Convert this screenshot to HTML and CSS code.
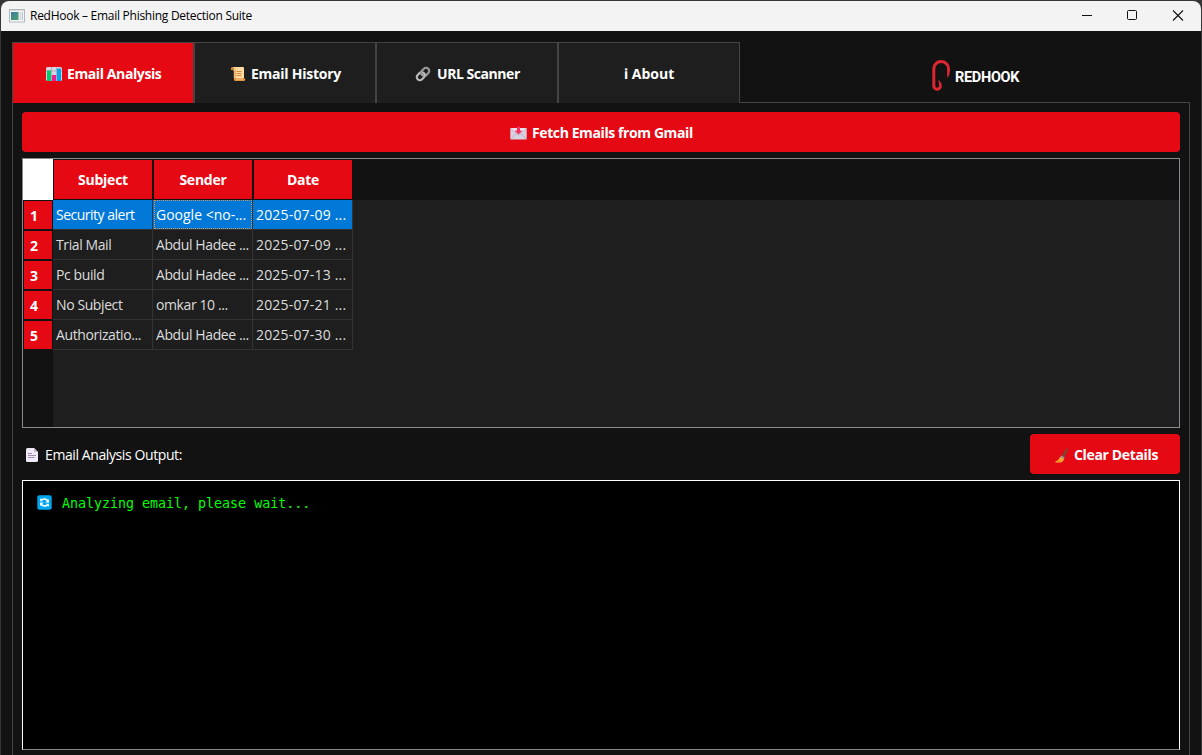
FILE: index.html
```html
<!DOCTYPE html>
<html lang="en">
<head>
<meta charset="utf-8">
<title>RedHook – Email Phishing Detection Suite</title>
<link rel="stylesheet" href="styles.css">
</head>
<body>
<div class="window">
  <header class="titlebar">
    <svg class="app-icon" width="16" height="14" viewBox="0 0 16 14"><defs><linearGradient id="screen" x1="0" y1="0" x2="1" y2="1"><stop offset="0" stop-color="#3f78a8"/><stop offset="1" stop-color="#49a567"/></linearGradient></defs><rect x=".5" y=".5" width="15" height="12.5" fill="#f5f5f5" stroke="#b4b8bb"/><path d="M1 1.5h14" stroke="#d4dadd"/><rect x="2" y="3" width="7.5" height="8" fill="url(#screen)"/><rect x="10.5" y="3" width="1.7" height="8" fill="#d4d8db"/><rect x="13" y="3" width="1" height="8" fill="#b2c7d5"/></svg>
    <span class="title">RedHook – Email Phishing Detection Suite</span>
    <div class="controls">
      <svg width="12" height="12" viewBox="0 0 12 12"><path d="M2 5.5h10" stroke="#111"/></svg>
      <svg width="12" height="12" viewBox="0 0 12 12"><rect x="1.5" y=".5" width="9" height="9" rx="1" fill="none" stroke="#111"/></svg>
      <svg width="12" height="12" viewBox="0 0 12 12"><path d="M1 .5l10 10M11 .5L1 10.500" stroke="#111" stroke-width="1.1"/></svg>
    </div>
  </header>
  <main class="content">
    <div class="top">
      <nav class="tabs">
        <div class="tab active analysis">
          <svg width="16" height="16" viewBox="0 0 16 16"><rect x="0" y="1" width="16" height="14" rx="1.5" fill="#d9d3e2"/><path d="M5.5 1v14M10.5 1v14M0 5h16M0 10h16" stroke="#a99bb8" stroke-width=".7"/><rect x="1" y="4.5" width="4" height="10.5" fill="#00cc6a"/><rect x="6" y="9" width="4" height="6" fill="#f01b93"/><rect x="11" y="2.5" width="4" height="12.5" fill="#00a6ed"/></svg>
          <span>Email Analysis</span></div>
        <div class="tab history">
          <svg width="16" height="16" viewBox="0 0 16 16"><path d="M2.5 1H13a1 1 0 0 1 1 1v10H5.5V4.5H3z" fill="#ffdba1"/><path d="M.8 2.8Q.8 1 2.6 1t1.8 1.8v2H3V4H1.400Q.8 4 .8 2.800z" fill="#d3883e"/><path d="M3.800 3v9.500h2V3z" fill="#f3bd78"/><path d="M6.500 5.500h5M6.500 7.500h5M6.500 9.500h5" stroke="#d3883e"/><path d="M4 12h9.500q1.700 0 1.700 1.500T13.500 15H5.500Q4 15 4 13.500z" fill="#e19747"/><path d="M6 13h7" stroke="#ffcf8d" stroke-width=".8"/></svg>
          <span>Email History</span></div>
        <div class="tab scanner">
          <svg width="16" height="16" viewBox="0 0 16 16"><g fill="none" stroke-width="2.200" transform="rotate(-45 8 8)"><rect x="6.800" y="4.900" width="8.700" height="6.200" rx="3.100" stroke="#999"/><rect x=".5" y="4.900" width="8.700" height="6.200" rx="3.100" stroke="#b8b8b8"/><path d="M6.800 8q0-3.100 3.100-3.100" stroke="#999"/></g></svg>
          <span>URL Scanner</span></div>
        <div class="tab about"><span>ℹ About</span></div>
      </nav>
      <div class="logo">
        <svg width="20" height="34" viewBox="0 0 20 34"><path d="M16.200 20.300Q19 17 19 12.500V10.500A8.850 8.500 0 0 0 1.300 10.500V28A4.800 4.600 0 0 0 10.900 28.300Q11 25 7.300 21.500Q8 24.500 8 28A1.800 1.800 0 0 1 4.300 27.800V10.800A5.900 5.700 0 0 1 16.100 10.800z" fill="#dc2631"/></svg>
        <span>REDHOOK</span>
      </div>
    </div>
    <section class="pane">
      <div class="button fetch">
        <svg width="17" height="14" viewBox="0 0 17 14"><rect x=".3" y="2" width="16.400" height="11.500" rx="1" fill="#d8d1df"/><path d="M.5 2.500L8.500 9l8-6.500" fill="#eee9f2" stroke="#afa1b9" stroke-width=".7"/><path d="M.5 13l5.800-5.500M16.500 13l-5.800-5.500" stroke="#afa1b9" stroke-width=".7"/><path d="M7 .5h3v4h2.500l-4 4-4-4H7z" fill="#f8315f"/></svg>
        <span>Fetch Emails from Gmail</span></div>
      <div class="table">
        <div class="thead"><div class="corner"></div><div class="th">Subject</div><div class="th">Sender</div><div class="th">Date</div></div>
        <div class="tbody">
          <div class="numbers"><div>1</div><div>2</div><div>3</div><div>4</div><div>5</div></div>
          <div class="rows">
            <div class="row selected"><div>Security alert</div><div class="focus">Google &lt;no-...</div><div class="date">2025-07-09 ...</div></div>
            <div class="row"><div>Trial Mail</div><div>Abdul Hadee ...</div><div class="date">2025-07-09 ...</div></div>
            <div class="row"><div>Pc build</div><div>Abdul Hadee ...</div><div class="date">2025-07-13 ...</div></div>
            <div class="row"><div>No Subject</div><div>omkar 10 ...</div><div class="date">2025-07-21 ...</div></div>
            <div class="row"><div>Authorizatio...</div><div>Abdul Hadee ...</div><div class="date">2025-07-30 ...</div></div>
          </div>
        </div>
      </div>
      <div class="output-head">
        <div class="label">
          <svg width="12" height="14" viewBox="0 0 12 14"><path d="M1.500 0h6.500l4 4v8.500q0 1.500-1.500 1.500h-9Q0 14 0 12.500v-11Q0 0 1.500 0z" fill="#f0e9f7"/><path d="M8 0v3q0 1 1 1h3z" fill="#c2b2cd"/><path d="M2 5.500h4M2 7.500h8M2 9.500h6.500" stroke="#9b8aa8"/></svg>
          <span>Email Analysis Output:</span></div>
        <div class="button clear">
          <svg width="14" height="15" viewBox="0 0 14 15"><path d="M11.500.8q1-.8 1.500 0 .3.600-.2 1.500L9.200 9.500 6.500 8z" fill="#7d4533"/><path d="M6.200 7.500l3.500 2-.8 1.700-3.700-2z" fill="#9b9b9b"/><path d="M5.200 9l3.800 2.200Q7.500 14.500 5 14.500H.7q-.9-.5 0-1Q3.500 12.500 5.200 9z" fill="#ffb02e"/><path d="M2 14.300q3-.5 4-3" stroke="#e87b20" fill="none"/></svg>
          <span>Clear Details</span></div>
      </div>
      <div class="console">
        <svg width="15" height="15" viewBox="0 0 15 15"><rect x=".3" y=".3" width="14.400" height="14.400" rx="2" fill="#00a6ed"/><g fill="none" stroke="#fff" stroke-width="1.600"><path d="M4 5.500Q5 4 7.500 4q2.200 0 3.300 2M11 9.500Q10 11 7.500 11q-2.200 0-3.300-2"/></g><path d="M12 4v3.500H8.300zM3 11V7.500h3.700z" fill="#fff"/><path d="M3.200 3v3.300h2.500zM11.800 12V8.700H9.300z" fill="#fff"/></svg>
        <span>Analyzing email, please wait...</span></div>
    </section>
  </main>
</div>
</body>
</html>
```
FILE: styles.css
```css
* { box-sizing: border-box; }
html, body { height: 100%; }
body {
  margin: 0;
  padding: 1px 1px 0;
  overflow: hidden;
  background: #373537;
  color: #fff;
  font: 14px/20px "Open Sans", "Noto Sans", sans-serif;
  letter-spacing: -0.4px;
}
svg { display: block; flex: none; }
span { white-space: pre; }
.window {
  height: 754px;
  display: flex;
  flex-direction: column;
  overflow: hidden;
  border-radius: 8px 8px 0 0;
  background: #121212;
}
.titlebar {
  height: 30px;
  flex: none;
  display: flex;
  align-items: center;
  padding: 0 17px 0 8px;
  background: #f3f3f3;
  color: #000;
  font-size: 12px;
}
.title { margin-left: 5px; letter-spacing: -0.27px; }
.controls { display: flex; gap: 34px; margin-left: auto; }
.content { flex: 1; min-height: 0; padding: 11px 11px 0; display: flex; flex-direction: column; }
.top { flex: none; display: flex; height: 61px; position: relative; z-index: 1; }
.tabs { display: flex; }
.tab {
  width: 182px;
  display: flex;
  align-items: center;
  padding-top: 2px;
  border: 1px solid #444;
  border-bottom: 0;
  background: #1e1e1e;
  font-weight: 700;
}
.tab.active { background: #e50914; }
.tab svg { margin-right: 5px; }
.analysis { padding-left: 33px; }
.history { padding-left: 35px; letter-spacing: -0.25px; }
.scanner { padding-left: 38px; letter-spacing: -0.45px; }
.scanner svg { margin-right: 6px; }
.about { padding-left: 65px; letter-spacing: 0; }
.logo { display: flex; align-items: center; margin-left: 191px; padding-top: 5px; }
.logo span { margin-left: 4px; padding-top: 6px; font: 700 14.5px/18px Roboto, sans-serif; letter-spacing: -0.3px; }
.pane {
  flex: none;
  height: 680px;
  margin-top: -1px;
  padding: 9px;
  border: 1px solid #444;
}
.button {
  height: 40px;
  display: flex;
  align-items: center;
  padding-top: 2px;
  border-radius: 4px;
  background: #e50914;
  font-weight: 700;
}
.fetch { padding-left: 488px; }
.fetch svg { margin-right: 5px; }
.table {
  height: 270px;
  margin-top: 6px;
  border: 1px solid #868990;
  background: #1e1e1e;
}
.thead { display: flex; height: 41px; background: #121212; }
.corner { width: 30px; background: #fff; }
.th {
  width: 100px;
  border: 1px solid #121212;
  background: #e50914;
  font-weight: 700;
  line-height: 39px;
  text-align: center;
  letter-spacing: -0.25px;
}
.tbody { display: flex; height: 227px; }
.numbers { width: 30px; background: #121212; }
.numbers div {
  height: 30px;
  padding-left: 6px;
  border: 1px solid #121212;
  background: #e50914;
  font-weight: 700;
  line-height: 30px;
}
.row { display: flex; height: 30px; }
.row div {
  width: 100px;
  padding-left: 3px;
  border: solid #333;
  border-width: 0 1px 1px 0;
  color: #ddd;
  line-height: 29px;
  white-space: nowrap;
}
.row .date { letter-spacing: 0.18px; }
.row.selected div { background: #0078d7; color: #fff; }
.row .focus { position: relative; letter-spacing: 0; }
.row.selected div:first-child { letter-spacing: -0.5px; }
.focus::after {
  content: "";
  position: absolute;
  inset: 0 0 0 1px;
  border: 1px dotted #d49a63;
}
.output-head { display: flex; justify-content: space-between; height: 40px; margin-top: 6px; }
.label { display: flex; align-items: center; padding: 2px 0 0 4px; }
.label svg { margin-right: 7px; }
.clear { width: 150px; padding-left: 25px; letter-spacing: -0.35px; }
.clear svg { margin-right: 5px; }
.console {
  height: 270px;
  margin-top: 6px;
  padding: 14px 0 0 14px;
  display: flex;
  align-items: flex-start;
  border: 1px solid #fff;
  border-bottom-color: #888;
  background: #000;
  color: #00ff00;
}
.console span { margin: 1px 0 0 10px; font: 13.3px/16px "DejaVu Sans Mono", monospace; letter-spacing: 0; }
```
